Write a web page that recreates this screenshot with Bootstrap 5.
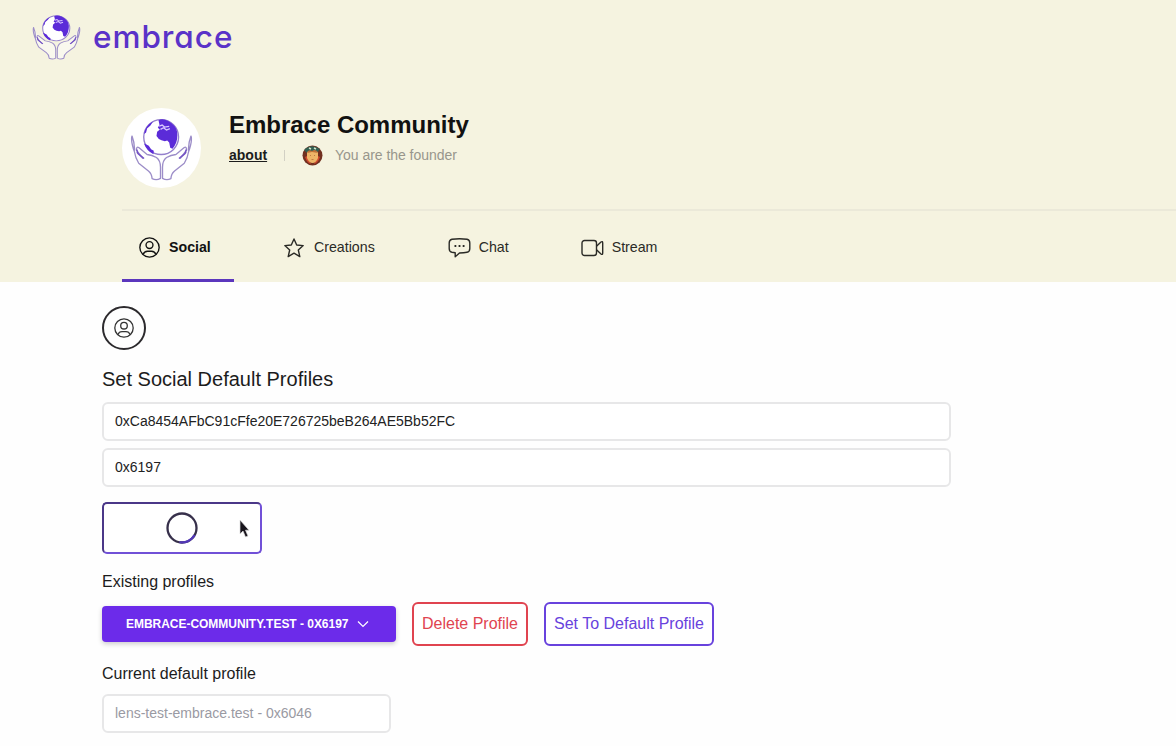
<!DOCTYPE html>
<html lang="en">
<head>
<meta charset="utf-8">
<meta name="viewport" content="width=device-width, initial-scale=1">
<title>Embrace Community</title>
<link href="https://cdn.jsdelivr.net/npm/bootstrap@5.3.0/dist/css/bootstrap.min.css" rel="stylesheet">
<style>
  body { font-family: "Liberation Sans", Arial, sans-serif; color: #1c1c1c; background: #fefefe; overflow: hidden; height: 746px; }
  svg { display: block; flex: none; }
  .hero { background: #f5f3e0; height: 282px; }
  .brand-row { height: 108px; padding: 13px 0 0 32px; }
  .brand-text { font-family: Inter, sans-serif; font-feature-settings: "cv11"; font-size: 31.5px; line-height: 48px; margin-left: 12px; color: #5a32c8; letter-spacing: .95px; font-weight: 500; }
  .community { margin-left: 122px; height: 103px; border-bottom: 2px solid #ebe9d9; }
  .avatar { width: 79px; height: 80px; background: #fff; }
  .community-info { margin-left: 28px; }
  h1 { font-size: 24px; line-height: 28px; font-weight: 700; margin: 3px 0 6px; color: #111; letter-spacing: -.02px; white-space: nowrap; }
  .meta { font-size: 14px; line-height: 20px; }
  .meta a, .founder { position: relative; top: -1px; }
  .about { color: #1c1c1c; font-weight: 700; }
  .bar { width: 1px; height: 11px; background: #d2d0c4; margin: 0 17px; }
  .founder { color: #98968c; margin-left: 12px; letter-spacing: -.04px; }
  .tabs { margin-left: 122px; height: 71px; font-size: 14.2px; }
  .tab { height: 71px; color: #2a2a26; border-bottom: 3px solid transparent; padding-top: 5px; white-space: nowrap; }
  .tab.active { color: #111; border-color: #5b36bd; font-weight: 700; width: 112px; padding-left: 17px; }
  main { padding: 24px 0 0 102px; }
  .round-btn { width: 44px; height: 44px; border: 2px solid #2c2a2d; border-radius: 50%; background: transparent; padding: 0; color: #333; }
  h2 { font-size: 20px; line-height: 24px; margin: 17px 0 11px; font-weight: 400; color: #1c1c1c; }
  .field { border: 2px solid #e7e7e8; border-radius: 6px; padding: 0 11px 2px; height: 39px; font-size: 14px; color: #222; background: #fff; box-shadow: none; }
  .wide { width: 849px; }
  .field:disabled { width: 289px; color: #9a9aa3; background: #fff; }
  .loading { width: 160px; height: 52px; border: 2px solid; border-color: #4b3788 #7150d7 #7150d7 #4b3788; border-radius: 5px; background: #fff; }
  .pointer { position: absolute; left: 135px; top: 15px; }
  .caption { font-size: 16px; line-height: 20px; }
  .select-btn { width: 294px; height: 36px; border-radius: 4px; background: #6c2bea; color: #fff; font-size: 12px; font-weight: 700; padding: 0 0 0 24px; border: 0; box-shadow: 0 2px 5px #0003; white-space: nowrap; letter-spacing: -.03px; }
  .line-btn { height: 44px; border: 2px solid; border-radius: 6px; background: #fff; font-size: 16px; padding: 0 0 1px; white-space: nowrap; }
  .remove { width: 116px; margin-left: 16px; color: #e04450; }
  .make-default { width: 170px; margin-left: 16px; color: #6842dd; }
</style>
<script src="https://cdn.jsdelivr.net/npm/bootstrap@5.3.0/dist/js/bootstrap.bundle.min.js"></script>
</head>
<body>
<svg width="0" height="0" class="position-absolute">
  <symbol id="hands" viewBox="60 64 188 194" preserveAspectRatio="none">
    <circle cx="153" cy="127" r="52" fill="#fff" stroke="#9480cc" stroke-width="4"/>
    <path d="M145 77Q153 72 165 75Q187 82 198 102Q205 120 198 143Q193 155 187 162L180 159L177 143L171 137L164 139Q153 138 146 133L139 124L141 111L149 104L143 99L148 90Z" fill="#5b2bd8"/>
    <path d="M103 146L116 153L123 163L131 168L130 178Q110 168 103 149Z" fill="#5b2bd8"/>
    <path d="M102 118Q106 93 129 80L121 92L111 101L108 113Z" fill="#5b2bd8"/>
    <path d="M147 94L156 91L163 97L177 95M151 104L160 99L169 106L179 102" fill="none" stroke="#d9c8ff" stroke-width="4"/>
    <g fill="#fff" fill-opacity=".45" stroke="#9c8dc8" stroke-width="4" stroke-linejoin="round" stroke-linecap="round">
      <path d="M66 124Q63 132 67 150Q70 163 73 170Q76 189 86 205L115 228Q125 236 126 251Q139 257 151 250L151 217Q151 197 139 188Q126 180 111 179L87 159Q79 153 79 166L98 190M73 167Q75 148 66 124M81 173L98 190"/>
      <path d="M242 124Q245 132 241 150Q238 163 235 170Q232 189 222 205L193 228Q183 236 182 251Q169 257 157 250L157 217Q157 197 169 188Q182 180 197 179L221 159Q229 153 229 166L210 190M235 167Q233 148 242 124M227 173L210 190"/>
    </g>
    <path d="M80 164L84 176L102 191M228 164L224 176L206 191" fill="none" stroke="#7350c6" stroke-width="4"/>
  </symbol>
  <symbol id="person" viewBox="0 0 20 20">
    <g fill="none" stroke="currentColor" stroke-width="1.3"><circle cx="10" cy="10" r="9.2"/><circle cx="10" cy="7.7" r="3.3"/><path d="M4 16.5Q5 13.6 8 13.6H12Q15 13.6 16 16.5"/></g>
  </symbol>
</svg>

<header class="hero">
  <div class="brand-row d-flex align-items-start">
    <svg width="49" height="47"><use href="#hands"/></svg>
    <span class="brand-text">embrace</span>
  </div>
  <div class="community d-flex align-items-start">
    <div class="avatar rounded-circle d-flex justify-content-center pt-2">
      <svg width="63" height="65"><use href="#hands"/></svg>
    </div>
    <div class="community-info">
      <h1>Embrace Community</h1>
      <div class="meta d-flex align-items-center">
        <a class="about" href="#">about</a>
        <span class="bar"></span>
        <svg width="21" height="21" viewBox="0 0 21 21">
          <circle cx="10.5" cy="10.5" r="10" fill="#713020"/>
          <path d="M2 5Q9-2 18 4L15 8H5Z" fill="#326052"/>
          <path d="M3 12Q5 18 9 19L5 11ZM18 12Q16 18 12 19L16 11Z" fill="#cf482c"/>
          <path d="M5 7Q10 5 16 7V13Q14 18 10.5 18Q7 18 5 13Z" fill="#edb467"/>
          <path d="M5 8Q6 4 10 6Q14 3 16 8L10 7Z" fill="#bd7138"/>
          <path d="M7 3L9 4M12 3L14 4" stroke="#d6e5cb" stroke-width="1.5"/>
          <path d="M8 10.5H9M12 10.5H13M9.5 14.5H11.5" stroke="#c07b42"/>
        </svg>
        <span class="founder">You are the founder</span>
      </div>
    </div>
  </div>
  <nav class="tabs d-flex">
    <div class="tab active d-flex align-items-center"><svg width="21" height="21"><use href="#person"/></svg><span style="margin-left:9px">Social</span></div>
    <div class="tab d-flex align-items-center" style="margin-left:50px">
      <svg width="20" height="20" viewBox="0 0 20 20"><path d="M10 1L12.7 7L19.2 7.6L14.3 12L15.8 18.6L10 15.1L4.2 18.6L5.7 12L.8 7.6L7.3 7Z" fill="none" stroke="currentColor" stroke-width="1.4" stroke-linejoin="round"/></svg>
      <span style="margin-left:10px">Creations</span>
    </div>
    <div class="tab d-flex align-items-center" style="margin-left:73px">
      <svg width="23" height="20" viewBox="0 0 23 20"><path d="M4 1.3Q11.5.2 19 1.3Q21.8 1.8 21.8 5V10.5Q21.8 13.8 19 14.3Q16 14.8 11.5 15L7.2 18.8V14.7L4 14.3Q1.2 13.8 1.2 10.5V5Q1.2 1.8 4 1.3Z" fill="none" stroke="currentColor" stroke-width="1.4" stroke-linejoin="round"/><path d="M6.5 8H8.3M10.6 8H12.4M14.7 8H16.5" stroke="currentColor" stroke-width="1.8"/></svg>
      <span style="margin-left:8px">Chat</span>
    </div>
    <div class="tab d-flex align-items-center" style="margin-left:72px">
      <svg width="23" height="18" viewBox="0 0 23 18"><g fill="none" stroke="currentColor" stroke-width="1.4" stroke-linejoin="round"><rect x="1" y="1.5" width="14.5" height="15" rx="2.5"/><path d="M15.5 7.2L20 3Q21.7 1.8 21.7 4V14Q21.7 16.2 20 15L15.5 10.8"/></g></svg>
      <span style="margin-left:8px">Stream</span>
    </div>
  </nav>
</header>

<main>
  <button class="round-btn d-flex align-items-center justify-content-center" aria-label="Profile"><svg width="20" height="20"><use href="#person"/></svg></button>
  <h2>Set Social Default Profiles</h2>
  <input class="form-control field wide" aria-label="Address" value="0xCa8454AFbC91cFfe20E726725beB264AE5Bb52FC">
  <input class="form-control field wide" style="margin-top:7px" aria-label="Profile id" value="0x6197">
  <div class="loading position-relative d-flex align-items-center justify-content-center" style="margin-top:15px">
    <svg width="32" height="32" viewBox="0 0 32 32"><circle cx="16" cy="16" r="14.5" fill="none" stroke="#37304b" stroke-width="2.3"/><path d="M28.6 23.2A14.5 14.5 0 0 1 13.5 30.2" fill="none" stroke="#5237b8" stroke-width="2.3"/></svg>
    <svg class="pointer" width="13" height="20" viewBox="0 0 13 20"><path d="M1 1V15L4 12L6.5 18L9 17L6.5 11.2H10Z" fill="#18141c" stroke="#ddd" stroke-width=".7"/></svg>
  </div>
  <div class="caption" style="margin-top:18px">Existing profiles</div>
  <div class="d-flex align-items-center" style="margin-top:10px">
    <button class="select-btn d-flex align-items-center"><span>EMBRACE-COMMUNITY.TEST - 0X6197</span><svg class="ms-2" width="14" height="10" viewBox="0 0 14 10"><path d="M2 2.5L7 7.5L12 2.5" fill="none" stroke="#fff" stroke-width="1.2"/></svg></button>
    <button class="line-btn remove">Delete Profile</button>
    <button class="line-btn make-default">Set To Default Profile</button>
  </div>
  <div class="caption" style="margin-top:18px">Current default profile</div>
  <input class="form-control field" style="margin-top:10px" aria-label="Default profile" value="lens-test-embrace.test - 0x6046" disabled>
</main>
</body>
</html>
